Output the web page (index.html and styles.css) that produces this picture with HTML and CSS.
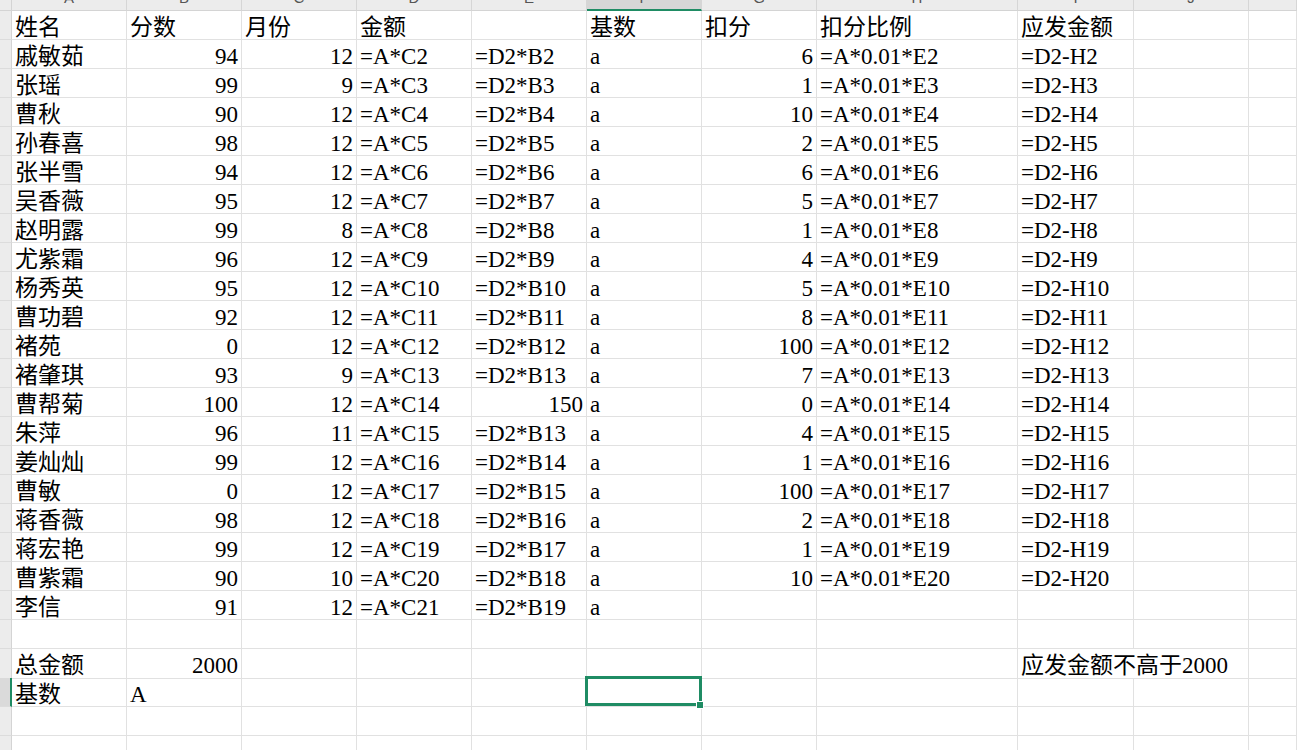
FILE: index.html
```html
<!DOCTYPE html>
<html>
<head>
<meta charset="utf-8">
<title>Sheet</title>
<link rel="stylesheet" href="styles.css">
</head>
<body>
<div class="sheet">
  <div class="r hdr">
    <div class="rh corner"></div>
    <div class="ch"><div class="lbl">A</div></div>
    <div class="ch"><div class="lbl">B</div></div>
    <div class="ch"><div class="lbl">C</div></div>
    <div class="ch"><div class="lbl">D</div></div>
    <div class="ch"><div class="lbl">E</div></div>
    <div class="ch active"><div class="lbl">F</div></div>
    <div class="ch"><div class="lbl">G</div></div>
    <div class="ch"><div class="lbl">H</div></div>
    <div class="ch"><div class="lbl">I</div></div>
    <div class="ch"><div class="lbl">J</div></div>
    <div class="ch"><div class="lbl"></div></div>
  </div>

  <div class="r"><div class="rh"></div><div class="c">姓名</div><div class="c">分数</div><div class="c">月份</div><div class="c">金额</div><div class="c"></div><div class="c">基数</div><div class="c">扣分</div><div class="c">扣分比例</div><div class="c">应发金额</div><div class="c"></div><div class="c"></div></div>
  <div class="r"><div class="rh"></div><div class="c">戚敏茹</div><div class="c n">94</div><div class="c n">12</div><div class="c">=A*C2</div><div class="c">=D2*B2</div><div class="c">a</div><div class="c n">6</div><div class="c">=A*0.01*E2</div><div class="c">=D2-H2</div><div class="c"></div><div class="c"></div></div>
  <div class="r"><div class="rh"></div><div class="c">张瑶</div><div class="c n">99</div><div class="c n">9</div><div class="c">=A*C3</div><div class="c">=D2*B3</div><div class="c">a</div><div class="c n">1</div><div class="c">=A*0.01*E3</div><div class="c">=D2-H3</div><div class="c"></div><div class="c"></div></div>
  <div class="r"><div class="rh"></div><div class="c">曹秋</div><div class="c n">90</div><div class="c n">12</div><div class="c">=A*C4</div><div class="c">=D2*B4</div><div class="c">a</div><div class="c n">10</div><div class="c">=A*0.01*E4</div><div class="c">=D2-H4</div><div class="c"></div><div class="c"></div></div>
  <div class="r"><div class="rh"></div><div class="c">孙春喜</div><div class="c n">98</div><div class="c n">12</div><div class="c">=A*C5</div><div class="c">=D2*B5</div><div class="c">a</div><div class="c n">2</div><div class="c">=A*0.01*E5</div><div class="c">=D2-H5</div><div class="c"></div><div class="c"></div></div>
  <div class="r"><div class="rh"></div><div class="c">张半雪</div><div class="c n">94</div><div class="c n">12</div><div class="c">=A*C6</div><div class="c">=D2*B6</div><div class="c">a</div><div class="c n">6</div><div class="c">=A*0.01*E6</div><div class="c">=D2-H6</div><div class="c"></div><div class="c"></div></div>
  <div class="r"><div class="rh"></div><div class="c">吴香薇</div><div class="c n">95</div><div class="c n">12</div><div class="c">=A*C7</div><div class="c">=D2*B7</div><div class="c">a</div><div class="c n">5</div><div class="c">=A*0.01*E7</div><div class="c">=D2-H7</div><div class="c"></div><div class="c"></div></div>
  <div class="r"><div class="rh"></div><div class="c">赵明露</div><div class="c n">99</div><div class="c n">8</div><div class="c">=A*C8</div><div class="c">=D2*B8</div><div class="c">a</div><div class="c n">1</div><div class="c">=A*0.01*E8</div><div class="c">=D2-H8</div><div class="c"></div><div class="c"></div></div>
  <div class="r"><div class="rh"></div><div class="c">尤紫霜</div><div class="c n">96</div><div class="c n">12</div><div class="c">=A*C9</div><div class="c">=D2*B9</div><div class="c">a</div><div class="c n">4</div><div class="c">=A*0.01*E9</div><div class="c">=D2-H9</div><div class="c"></div><div class="c"></div></div>
  <div class="r"><div class="rh"></div><div class="c">杨秀英</div><div class="c n">95</div><div class="c n">12</div><div class="c">=A*C10</div><div class="c">=D2*B10</div><div class="c">a</div><div class="c n">5</div><div class="c">=A*0.01*E10</div><div class="c">=D2-H10</div><div class="c"></div><div class="c"></div></div>
  <div class="r"><div class="rh"></div><div class="c">曹功碧</div><div class="c n">92</div><div class="c n">12</div><div class="c">=A*C11</div><div class="c">=D2*B11</div><div class="c">a</div><div class="c n">8</div><div class="c">=A*0.01*E11</div><div class="c">=D2-H11</div><div class="c"></div><div class="c"></div></div>
  <div class="r"><div class="rh"></div><div class="c">褚苑</div><div class="c n">0</div><div class="c n">12</div><div class="c">=A*C12</div><div class="c">=D2*B12</div><div class="c">a</div><div class="c n">100</div><div class="c">=A*0.01*E12</div><div class="c">=D2-H12</div><div class="c"></div><div class="c"></div></div>
  <div class="r"><div class="rh"></div><div class="c">褚肇琪</div><div class="c n">93</div><div class="c n">9</div><div class="c">=A*C13</div><div class="c">=D2*B13</div><div class="c">a</div><div class="c n">7</div><div class="c">=A*0.01*E13</div><div class="c">=D2-H13</div><div class="c"></div><div class="c"></div></div>
  <div class="r"><div class="rh"></div><div class="c">曹帮菊</div><div class="c n">100</div><div class="c n">12</div><div class="c">=A*C14</div><div class="c n">150</div><div class="c">a</div><div class="c n">0</div><div class="c">=A*0.01*E14</div><div class="c">=D2-H14</div><div class="c"></div><div class="c"></div></div>
  <div class="r"><div class="rh"></div><div class="c">朱萍</div><div class="c n">96</div><div class="c n">11</div><div class="c">=A*C15</div><div class="c">=D2*B13</div><div class="c">a</div><div class="c n">4</div><div class="c">=A*0.01*E15</div><div class="c">=D2-H15</div><div class="c"></div><div class="c"></div></div>
  <div class="r"><div class="rh"></div><div class="c">姜灿灿</div><div class="c n">99</div><div class="c n">12</div><div class="c">=A*C16</div><div class="c">=D2*B14</div><div class="c">a</div><div class="c n">1</div><div class="c">=A*0.01*E16</div><div class="c">=D2-H16</div><div class="c"></div><div class="c"></div></div>
  <div class="r"><div class="rh"></div><div class="c">曹敏</div><div class="c n">0</div><div class="c n">12</div><div class="c">=A*C17</div><div class="c">=D2*B15</div><div class="c">a</div><div class="c n">100</div><div class="c">=A*0.01*E17</div><div class="c">=D2-H17</div><div class="c"></div><div class="c"></div></div>
  <div class="r"><div class="rh"></div><div class="c">蒋香薇</div><div class="c n">98</div><div class="c n">12</div><div class="c">=A*C18</div><div class="c">=D2*B16</div><div class="c">a</div><div class="c n">2</div><div class="c">=A*0.01*E18</div><div class="c">=D2-H18</div><div class="c"></div><div class="c"></div></div>
  <div class="r"><div class="rh"></div><div class="c">蒋宏艳</div><div class="c n">99</div><div class="c n">12</div><div class="c">=A*C19</div><div class="c">=D2*B17</div><div class="c">a</div><div class="c n">1</div><div class="c">=A*0.01*E19</div><div class="c">=D2-H19</div><div class="c"></div><div class="c"></div></div>
  <div class="r"><div class="rh"></div><div class="c">曹紫霜</div><div class="c n">90</div><div class="c n">10</div><div class="c">=A*C20</div><div class="c">=D2*B18</div><div class="c">a</div><div class="c n">10</div><div class="c">=A*0.01*E20</div><div class="c">=D2-H20</div><div class="c"></div><div class="c"></div></div>
  <div class="r"><div class="rh"></div><div class="c">李信</div><div class="c n">91</div><div class="c n">12</div><div class="c">=A*C21</div><div class="c">=D2*B19</div><div class="c">a</div><div class="c"></div><div class="c"></div><div class="c"></div><div class="c"></div><div class="c"></div></div>
  <div class="r"><div class="rh"></div><div class="c"></div><div class="c"></div><div class="c"></div><div class="c"></div><div class="c"></div><div class="c"></div><div class="c"></div><div class="c"></div><div class="c"></div><div class="c"></div><div class="c"></div></div>
  <div class="r"><div class="rh"></div><div class="c">总金额</div><div class="c n">2000</div><div class="c"></div><div class="c"></div><div class="c"></div><div class="c"></div><div class="c"></div><div class="c"></div><div class="c spill">应发金额不高于2000</div><div class="c"></div><div class="c"></div></div>
  <div class="r"><div class="rh sel"></div><div class="c">基数</div><div class="c">A</div><div class="c"></div><div class="c"></div><div class="c"></div><div class="c selected"></div><div class="c"></div><div class="c"></div><div class="c"></div><div class="c"></div><div class="c"></div></div>
  <div class="r"><div class="rh"></div><div class="c"></div><div class="c"></div><div class="c"></div><div class="c"></div><div class="c"></div><div class="c"></div><div class="c"></div><div class="c"></div><div class="c"></div><div class="c"></div><div class="c"></div></div>
  <div class="r"><div class="rh"></div><div class="c"></div><div class="c"></div><div class="c"></div><div class="c"></div><div class="c"></div><div class="c"></div><div class="c"></div><div class="c"></div><div class="c"></div><div class="c"></div><div class="c"></div></div>
</div>
</body>
</html>
```

FILE: styles.css
```css
html, body {
  margin: 0;
  padding: 0;
  background: #ffffff;
  overflow: hidden;
}

.sheet {
  width: 1297px;
  height: 750px;
  overflow: hidden;
  font-family: "Liberation Serif", "DejaVu Serif", "Noto Sans CJK SC", serif;
  font-size: 23px;
  color: #000;
}

.r {
  display: grid;
  grid-template-columns: 12px 115px 115px 115px 115px 115px 115px 115px 201px 116px 115px 1fr;
  height: 29px;
}

.r.hdr {
  height: 11px;
}

.c,
.ch,
.rh {
  box-sizing: border-box;
  border-right: 1px solid #e1e1e1;
  border-bottom: 1px solid #e1e1e1;
}

.c {
  padding: 4px 3px 0 3px;
  line-height: 25px;
  white-space: nowrap;
  overflow: hidden;
}

.c.n {
  text-align: right;
}

.c.spill {
  overflow: visible;
  border-right-color: transparent;
}

.rh {
  background: #ececec;
  border-right-color: #d4d4d4;
  border-bottom-color: #dcdcdc;
}

.rh.corner {
  border-bottom-color: #d4d4d4;
}

.rh.sel {
  background: #dadada;
  border-right: 2px solid #1f8c64;
}

.ch {
  background: #ececec;
  border-right-color: #d6d6d6;
  border-bottom-color: #d4d4d4;
  overflow: hidden;
  text-align: center;
  font-family: "Liberation Sans", "Noto Sans", sans-serif;
  font-size: 15px;
  color: #555;
}

.ch.active {
  background: #d6d6d6;
  border-bottom: 2px solid #1f8c64;
}

.lbl {
  line-height: 16px;
  height: 16px;
  margin-top: -10px;
}

.c.selected {
  position: relative;
  overflow: visible;
}

.c.selected::after {
  content: "";
  position: absolute;
  left: -2px;
  top: -2px;
  right: -1px;
  bottom: 0;
  border: 3px solid #1f8c64;
  box-sizing: border-box;
}

.c.selected::before {
  content: "";
  position: absolute;
  right: -3px;
  bottom: -3px;
  width: 6px;
  height: 6px;
  background: #1f8c64;
  border: 1px solid #ffffff;
  z-index: 2;
}
```
